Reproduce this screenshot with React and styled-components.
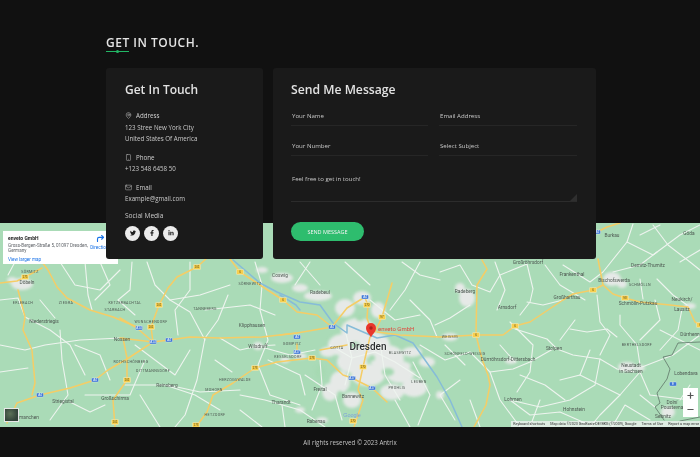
import React from 'react';
import styled, { createGlobalStyle } from 'styled-components';
import { MapPin, Smartphone, Mail, Plus, Minus, CornerUpRight } from 'lucide-react';
import { FaTwitter, FaFacebookF, FaLinkedinIn } from 'react-icons/fa';

const Global = createGlobalStyle`
  html, body { margin: 0; padding: 0; background: #111111; overflow: hidden; }
  body { font-family: "Open Sans", "Liberation Sans", sans-serif; }
  * { box-sizing: border-box; }
`;

const Page = styled.div`
  width: 700px;
  height: 457px;
  background: #111111;
  display: flex;
  flex-direction: column;
  filter: blur(0.3px);
`;

const Section = styled.section`
  padding: 35px 0 0 106px;
  position: relative;
  z-index: 2;
  margin-bottom: -36px;
`;

const Heading = styled.h2`
  margin: 0;
  font-size: 12px;
  line-height: 16px;
  font-weight: 600;
  letter-spacing: 0.5px;
  color: #e4e4e4;
`;

const Underline = styled.div`
  position: relative;
  width: 23px;
  height: 1px;
  margin: 0 0 16px;
  background: #22b765;

  &::after {
    content: '';
    position: absolute;
    left: 10px;
    top: -1px;
    width: 3px;
    height: 3px;
    border-radius: 50%;
    background: #22b765;
  }
`;

const Cards = styled.div`
  display: flex;
  gap: 10px;
  height: 191px;
`;

const Card = styled.div`
  width: ${(p) => p.$width}px;
  background: #1a1a1a;
  border-radius: 3px;
  padding: 13px 18px 0 ${(p) => p.$left}px;
`;

const CardTitle = styled.h3`
  margin: 0;
  font-size: ${(p) => p.$size}px;
  line-height: 18px;
  font-weight: 600;
  color: #e2e2e2;
`;

const InfoList = styled.div`
  margin-top: 11px;
  display: flex;
  flex-direction: column;
  gap: 7px;
`;

const InfoBlock = styled.div`
  font-size: 6.2px;
  line-height: 11.5px;
  color: #cacaca;
`;

const InfoLabel = styled.div`
  display: flex;
  align-items: center;
  gap: 4px;
  color: #d2d2d2;

  svg { width: 7px; height: 7px; stroke-width: 1.6; }
`;

const SocialTitle = styled.div`
  margin-top: 5px;
  font-size: 6.6px;
  line-height: 11px;
  color: #cacaca;
`;

const Socials = styled.div`
  display: flex;
  gap: 4px;
  margin-top: 5px;
`;

const Social = styled.div`
  width: 15px;
  height: 15px;
  border-radius: 50%;
  background: #ececec;
  color: #222;
  display: flex;
  align-items: center;
  justify-content: center;

  svg { width: 6px; height: 6px; }
`;

const FormGrid = styled.form`
  margin-top: 7px;
  display: grid;
  grid-template-columns: 137px 138px;
  column-gap: 11px;
  row-gap: 10px;
`;

const fieldStyles = `
  width: 100%;
  background: transparent;
  border: 0;
  outline: 0;
  border-bottom: 1px solid #262626;
  padding: 0 0 0 1px;
  font-family: "Open Sans", "Liberation Sans", sans-serif;
  font-size: 6.1px;
  color: #c8c8c8;
  &::placeholder { color: #c8c8c8; opacity: 1; }
`;

const Field = styled.input`
  ${fieldStyles}
  height: 20px;
`;

const Select = styled.select`
  ${fieldStyles}
  height: 20px;
  appearance: none;
`;

const MessageWrap = styled.div`
  grid-column: 1 / 3;
  position: relative;
  height: 36px;

  &::after {
    content: '';
    position: absolute;
    right: 0;
    bottom: 1px;
    border-style: solid;
    border-width: 0 0 7px 7px;
    border-color: transparent transparent #2f2f2f transparent;
  }
`;

const Message = styled.textarea`
  ${fieldStyles}
  display: block;
  height: 36px;
  resize: none;
  padding-top: 8px;
  line-height: 10px;
  border-bottom-color: #2c2c2c;
`;

const SendButton = styled.button`
  display: block;
  margin-top: 20px;
  width: 73px;
  height: 19px;
  border: 0;
  border-radius: 10px;
  background: #2ebd6e;
  color: #f2f2f2;
  font-family: "Open Sans", "Liberation Sans", sans-serif;
  font-size: 5.5px;
  padding: 0;
`;

const MapArea = styled.div`
  position: relative;
  height: 204px;
  overflow: hidden;
  background: #aadbb7;
  flex: none;
`;

const MapArt = styled.svg`
  display: block;
  width: 700px;
  height: 204px;
`;

const UrbanLayer = styled.g`
  filter: blur(1.4px);
`;

const Road = styled.polyline`
  fill: none;
  stroke: ${(p) => (p.$kind === 'main' ? '#f5cd66' : p.$kind === 'water' ? '#86bcd8' : p.$kind === 'border' ? '#5f7568' : '#eef4ef')};
  stroke-width: ${(p) => (p.$kind === 'main' ? 1.5 : p.$kind === 'water' ? 1.5 : p.$kind === 'border' ? 0.8 : 1.1)};
  stroke-linejoin: round;
  stroke-linecap: round;
`;

const Urban = styled.ellipse`
  fill: #e6e9e7;
`;

const Forest = styled.ellipse`
  fill: #a6d9b2;
`;

const Label = styled.text`
  font-family: Roboto, "Liberation Sans", sans-serif;
  font-size: ${(p) => (p.$small ? 3.6 : 4.8)}px;
  letter-spacing: ${(p) => (p.$small ? 0.35 : 0)}px;
  fill: #4d5751;
  text-anchor: middle;
`;

const CityLabel = styled.text`
  font-family: Roboto, "Liberation Sans", sans-serif;
  font-size: 10px;
  font-weight: 500;
  fill: #2c2f30;
  text-anchor: middle;
  stroke: #ffffff;
  stroke-width: 0.4;
  paint-order: stroke;
`;

const PinLabel = styled.text`
  font-family: Roboto, "Liberation Sans", sans-serif;
  font-size: 6px;
  fill: #e0463a;
`;

const GoogleMark = styled.text`
  font-family: "Liberation Sans", sans-serif;
  font-size: 5.5px;
  fill: #7c9fdc;
  text-anchor: middle;
`;

const Shield = styled.rect`
  fill: ${(p) => (p.$blue ? '#3f78d6' : '#f7cf4f')};
  stroke: #fff;
  stroke-width: 0.3;
`;

const ShieldText = styled.text`
  font-family: "Liberation Sans", sans-serif;
  font-size: 3px;
  fill: ${(p) => (p.$blue ? '#ffffff' : '#5a4a12')};
  text-anchor: middle;
`;

const InfoWindow = styled.div`
  position: absolute;
  left: 3px;
  top: 8px;
  width: 115px;
  height: 33px;
  background: #fff;
  padding: 4px 5px;
  font-family: Roboto, "Liberation Sans", sans-serif;
  font-size: 4.6px;
  line-height: 5.4px;
  color: #5f6368;
`;

const PlaceName = styled.div`
  font-weight: 700;
  font-size: 5px;
  line-height: 6px;
  color: #222;
  margin-bottom: 2px;
`;

const Address = styled.div`
  width: 80px;
`;

const MapLink = styled.div`
  color: #1a73e8;
  margin-top: 3px;
  font-size: 4.6px;
`;

const Directions = styled.div`
  position: absolute;
  right: 4px;
  top: 3px;
  width: 27px;
  color: #1a73e8;
  display: flex;
  flex-direction: column;
  align-items: center;
  font-size: 4.6px;
  line-height: 5px;

  svg { width: 9px; height: 9px; stroke-width: 3; margin-bottom: 2px; }
`;

const Zoom = styled.div`
  position: absolute;
  right: 2px;
  bottom: 10px;
  width: 15px;
  height: 29px;
  background: #fff;
  display: flex;
  flex-direction: column;
  align-items: center;
  justify-content: space-around;
  color: #555;

  svg { width: 9px; height: 9px; stroke-width: 3.2; }
`;

const Thumb = styled.div`
  position: absolute;
  left: 4px;
  bottom: 5px;
  width: 15px;
  height: 14px;
  border: 1px solid #e8e8e8;
  background: radial-gradient(circle at 40% 40%, #5c7258, #33443a 70%);
`;

const Attribution = styled.div`
  position: absolute;
  right: 0;
  bottom: 0;
  height: 6px;
  display: flex;
  gap: 5px;
  padding: 0 1px 0 2px;
  background: rgba(245, 245, 245, 0.7);
  font-family: Roboto, "Liberation Sans", sans-serif;
  font-size: 3.7px;
  line-height: 6px;
  color: #333;
  white-space: nowrap;
`;

const Footer = styled.footer`
  height: 30px;
  flex: none;
  display: flex;
  align-items: center;
  justify-content: center;
  font-size: 6.2px;
  color: #c4c4c4;
  background: #111111;
`;

const urban = [
  [358, 330, 17, 12], [343, 345, 15, 11], [372, 345, 18, 13], [387, 358, 17, 13], [352, 362, 15, 11], [368, 375, 17, 11],
  [400, 372, 15, 11], [414, 388, 13, 9], [392, 392, 12, 8], [340, 382, 10, 11], [330, 392, 8, 9], [352, 400, 9, 8],
  [345, 308, 10, 9], [362, 298, 9, 7], [378, 310, 7, 8], [328, 352, 8, 5], [318, 296, 14, 5], [300, 288, 8, 4], [282, 278, 11, 5],
  [262, 270, 6, 3], [412, 352, 10, 5], [427, 362, 8, 5], [22, 284, 11, 6], [12, 280, 5, 3], [467, 298, 8, 9], [460, 288, 5, 5],
  [612, 279, 9, 7], [622, 284, 5, 4], [627, 367, 9, 5], [640, 368, 5, 3], [450, 337, 8, 4], [668, 412, 7, 6], [258, 346, 5, 4],
  [690, 306, 6, 3], [511, 361, 6, 3], [300, 356, 7, 3], [285, 360, 5, 3], [440, 395, 4, 4], [300, 410, 5, 3], [322, 420, 6, 3],
];

const forest = [
  [355, 345, 5, 3], [388, 372, 6, 4], [372, 358, 3, 3], [415, 368, 5, 4], [320, 372, 5, 7], [340, 395, 3, 4], [360, 318, 4, 3],
];

const mainRoads = [
  '153,342 169,340 190,337 220,338 262,337 297,333 332,327 347,308 365,297',
  '120,318 137,328 153,342',
  '120,338 153,342 127,359 108,370 95,380 70,388 40,395 17,403 7,423',
  '230,259 240,272 263,287 283,300 297,312 317,315 332,327',
  '206,259 197,267 177,277 168,288 159,305 151,327 153,342',
  '196,427 207,412 213,395 233,383 255,368 277,362 312,358 327,360 343,375 352,378 372,388 387,402',
  '297,344 297,352',
  '365,298 368,305 367,318 372,333',
  '392,283 390,290 382,317 375,332',
  '280,335 297,333',
  '377,332 400,335 440,337 476,335 503,335 515,326 530,322 563,300 573,294 593,290 603,285 598,259',
  '370,337 363,367 358,390 363,400 354,427',
  '320,350 347,345',
  '482,260 487,269 477,285 476,335 482,359 488,375 490,385 486,405 474,427',
  '603,285 613,294 625,298 640,302 670,305 688,307 695,322 700,325',
  '597,232 607,227 620,223',
  '42,262 48,270 57,287 67,298 90,310 113,317 137,327',
  '0,283 17,281 25,277 42,268',
  '18,290 25,317 23,330 32,350 35,383 32,395',
  '123,338 127,358 127,380 113,400 115,427',
];

const minorRoads = [
  '440,272 460,265 472,285 490,292 500,275 527,264 533,289 530,302 520,315',
  '527,302 543,305 563,300', '563,265 590,282 603,272 627,242 633,224',
  '515,329 547,339 557,349 573,355 600,359 617,369 635,372', '510,322 533,345 530,372 517,392',
  '553,349 530,362 513,369 490,372', '597,295 600,322 610,335 600,355', '570,329 587,332 607,329 617,337',
  '620,315 620,325 637,345 640,365', '642,367 673,355 700,335', '627,242 653,255 680,235 700,225',
  '613,272 640,265 657,252', '657,279 673,295 687,305', '640,279 643,299', '653,225 668,245 690,262 700,270',
  '682,309 678,330 660,350', '640,372 650,395 690,400', '600,359 595,385 570,400 540,407 510,400',
  '640,372 620,395 600,415 590,427', '510,400 530,415 560,412 585,423', '560,380 580,375 620,395',
  '460,380 440,395 455,420', '420,345 445,360 470,352 490,372 500,400 520,427', '410,300 430,320 437,337',
  '470,305 450,318 435,325', '495,262 505,290 497,310', '420,262 405,290 390,310', '520,375 545,385 565,400',
  '413,362 430,395 418,425', '395,400 410,427', '440,280 420,275 402,262', '660,330 700,350', '650,420 625,405 612,427',
  '655,407 640,395', '690,385 680,400', '640,235 660,225', '680,262 700,250', '545,265 560,285 585,300', '575,320 560,340',
  '655,300 660,320 640,340', '590,350 580,375', '540,400 530,427', '470,400 480,427', '445,345 465,365', '500,345 515,362',
  '0,300 18,298 25,317 50,330 70,345 85,375', '60,262 75,285 100,290 120,270', '85,262 88,295 92,310',
  '132,262 130,290 118,300 135,315', '147,262 155,285 170,300 200,295 230,285', '170,300 190,312 205,340',
  '255,262 262,285 260,310 268,340 258,365 270,395 300,405', '228,295 218,320 205,338 197,380 185,415 175,427',
  '168,385 200,392 240,390', '135,345 175,375 190,350', '125,385 165,385 195,395 220,410', '60,330 62,360 68,395 50,420',
  '0,345 25,350 45,345 80,340 120,338', '0,372 28,368', '70,402 90,412 105,405', '140,395 160,427', '240,395 265,400 300,410 325,427',
  '258,346 290,355 315,350', '282,405 285,427', '320,360 322,385 312,410', '305,375 335,395 342,420', '268,360 300,375 305,395',
  '220,338 240,350 258,346 275,345', '205,310 250,305 275,315', '300,262 320,285', '345,262 370,285', '15,262 8,275',
  '190,262 190,290 175,310 178,335', '100,262 110,285 95,300', '40,300 55,318', '75,345 100,355 110,380', '145,360 130,395 85,395',
  '330,345 352,358 375,352 395,362 420,378', '345,330 352,358 345,385', '380,342 385,375 400,400', '370,300 395,320 420,315',
  '215,360 232,372', '240,410 262,427', '310,262 295,285',
];

const water = [
  '233,260 260,283 277,292 300,302 320,305 333,323 347,333 347,325 377,338 395,335 413,343 437,377 450,400 462,427',
  '280,295 296,305 300,310',
];

const border = ['700,342 678,343 672,355 663,357 670,369 667,379 657,393 660,403 655,407 664,420', '680,421 700,417'];

const labels = [
  [280, 277, 'Coswig'], [320, 294, 'Radebeul'], [250, 285, 'SÖRNEWITZ', 1], [252, 327, 'Klipphausen'], [258, 348, 'Wilsdruff'],
  [205, 310, 'TANNEBERG', 1], [125, 304, 'KETZERBACHTAL', 1], [115, 311, 'STARBACH', 1], [151, 323, 'WUNSCHENDORF', 1],
  [44, 323, 'Niederstriegis'], [23, 304, 'ERLEBACH', 1], [66, 304, 'ZIEGRA', 1], [27, 284, 'Döbeln'], [30, 273, 'SÖRMITZ', 1],
  [122, 341, 'Nossen'], [131, 363, 'ROTHSCHÖNBERG', 1], [167, 387, 'Reinsberg'], [153, 372, 'DITTMANNSDORF', 1],
  [235, 381, 'HERZOGSWALDE', 1], [214, 391, 'MOHORN', 1], [215, 416, 'HETZDORF', 1], [281, 404, 'Tharandt'], [316, 423, 'Rabenau'],
  [320, 391, 'Freital'], [353, 398, 'Bannewitz'], [288, 358, 'KESSELSDORF', 1], [292, 345, 'GOMPITZ', 1], [337, 349, 'COTTA', 1],
  [400, 354, 'BLASEWITZ', 1], [419, 383, 'LEUBEN', 1], [397, 389, 'PROHLIS', 1],
  [528, 264, 'Großröhrsdorf'], [572, 276, 'Frankenthal'], [567, 299, 'Großharthau'], [614, 282, 'Bischofswerda'], [638, 305, 'Schmölln-Putzkau'],
  [682, 301, 'Neukirch/'], [682, 311, 'Lausitz'], [465, 293, 'Radeberg'], [507, 309, 'Arnsdorf'], [554, 350, 'Stolpen'], [508, 361, 'Dürrröhrsdorf-Dittersbach'],
  [465, 355, 'SCHÖNFELD-WEISSIG', 1], [450, 338, 'WEISSIG', 1], [631, 367, 'Neustadt'], [631, 373, 'in Sachsen'], [637, 346, 'BERTHELSDORF', 1],
  [648, 267, 'Demitz-Thumitz'], [689, 235, 'Göda'], [612, 237, 'Burkau'], [640, 286, 'SCHMÖLLN', 1], [690, 336, 'Dürrhenn'],
  [686, 375, 'Lobendava'], [513, 401, 'Lohmen'], [574, 411, 'Hohnstein'], [672, 404, 'Dolní'], [672, 409, 'Poustevna'], [663, 418, 'Sebnitz'],
  [63, 403, 'Striegistal'], [115, 400, 'Großschirma'], [29, 419, 'manchen'],
];

const shields = [
  [197, 267, '101'], [159, 305, '101'], [151, 327, '101'], [25, 277, '175'], [127, 380, '101'], [115, 422, '101'], [196, 425, '173'],
  [255, 368, '173'], [312, 358, '173'], [240, 272, '6'], [283, 300, '6'], [367, 305, '170'], [382, 317, '97'], [363, 367, '170'],
  [476, 335, '6'], [515, 326, '6'], [593, 290, '6'], [625, 298, '98'], [700, 325, '6'], [353, 421, '170'],
];

const blueShields = [
  [332, 327, 'A4'], [297, 337, 'A4'], [169, 340, 'A4'], [153, 342, 'A14'], [139, 328, 'A14'], [95, 380, 'A4'], [40, 395, 'A4'],
  [297, 352, 'A17'], [352, 378, 'A17'], [372, 388, 'A17'], [365, 297, 'A4'], [597, 232, 'A4'], [673, 384, 'E'],
];

const MapDrawing = () => (
  <MapArt viewBox="0 223 700 204">
    <UrbanLayer>
      {urban.map(([cx, cy, rx, ry], i) => <Urban key={i} cx={cx} cy={cy} rx={rx} ry={ry} />)}
      {forest.map(([cx, cy, rx, ry], i) => <Forest key={i} cx={cx} cy={cy} rx={rx} ry={ry} />)}
    </UrbanLayer>
    {minorRoads.map((p, i) => <Road key={i} points={p} />)}
    {water.map((p, i) => <Road key={i} points={p} $kind="water" />)}
    {border.map((p, i) => <Road key={i} points={p} $kind="border" />)}
    {mainRoads.map((p, i) => <Road key={i} points={p} $kind="main" />)}
    {shields.map(([x, y, t], i) => (
      <g key={i}>
        <Shield x={x - 3.5} y={y - 2.5} width="7" height="5" rx="0.6" />
        <ShieldText x={x} y={y + 1}>{t}</ShieldText>
      </g>
    ))}
    {blueShields.map(([x, y, t], i) => (
      <g key={i}>
        <Shield $blue x={x - 3.5} y={y - 2} width="7" height="4" rx="1" />
        <ShieldText $blue x={x} y={y + 1}>{t}</ShieldText>
      </g>
    ))}
    {labels.map(([x, y, t, small], i) => <Label key={i} x={x} y={y} $small={small}>{t}</Label>)}
    <CityLabel x="368" y="350">Dresden</CityLabel>
    <PinLabel x="378" y="331">enveto GmbH</PinLabel>
    <path d="M371 337.500c-1-3-5-5.500-5-9.500a5 5 0 0 1 10 0c0 4-4 6.500-5 9.500z" fill="#e8372c" />
    <circle cx="371" cy="328" r="1.700" fill="#a9221c" />
    <GoogleMark x="352" y="417">Google</GoogleMark>
  </MapArt>
);

const App = () => (
  <Page>
    <Global />
    <Section>
      <Heading>GET IN TOUCH.</Heading>
      <Underline />
      <Cards>
        <Card $width={157} $left={19}>
          <CardTitle $size={12}>Get In Touch</CardTitle>
          <InfoList>
            <InfoBlock>
              <InfoLabel><MapPin />Address</InfoLabel>
              <div>123 Stree New York City</div>
              <div>United States Of America</div>
            </InfoBlock>
            <InfoBlock>
              <InfoLabel><Smartphone />Phone</InfoLabel>
              <div>+123 548 6458 50</div>
            </InfoBlock>
            <InfoBlock>
              <InfoLabel><Mail />Email</InfoLabel>
              <div>Example@gmail.com</div>
            </InfoBlock>
          </InfoList>
          <SocialTitle>Social Media</SocialTitle>
          <Socials>
            <Social><FaTwitter /></Social>
            <Social><FaFacebookF /></Social>
            <Social><FaLinkedinIn /></Social>
          </Socials>
        </Card>
        <Card $width={323} $left={18}>
          <CardTitle $size={12.2}>Send Me Message</CardTitle>
          <FormGrid>
            <Field placeholder="Your Name" />
            <Field placeholder="Email Address" />
            <Field placeholder="Your Number" />
            <Select defaultValue="">
              <option value="">Select Subject</option>
            </Select>
            <MessageWrap>
              <Message placeholder="Feel free to get in touch!" />
            </MessageWrap>
          </FormGrid>
          <SendButton type="button">SEND MESSAGE</SendButton>
        </Card>
      </Cards>
    </Section>
    <MapArea>
      <MapDrawing />
      <InfoWindow>
        <PlaceName>enveto GmbH</PlaceName>
        <Address>Gross-Bergen-Straße 5, 01097 Dresden, Germany</Address>
        <MapLink>View larger map</MapLink>
        <Directions><CornerUpRight />Directions</Directions>
      </InfoWindow>
      <Thumb />
      <Zoom><Plus /><Minus /></Zoom>
      <Attribution>
        <span>Keyboard shortcuts</span>
        <span>Map data ©2023 GeoBasis-DE/BKG (©2009), Google</span>
        <span>Terms of Use</span>
        <span>Report a map error</span>
      </Attribution>
    </MapArea>
    <Footer>All rights reserved © 2023 Antrix</Footer>
  </Page>
);

export default App;
